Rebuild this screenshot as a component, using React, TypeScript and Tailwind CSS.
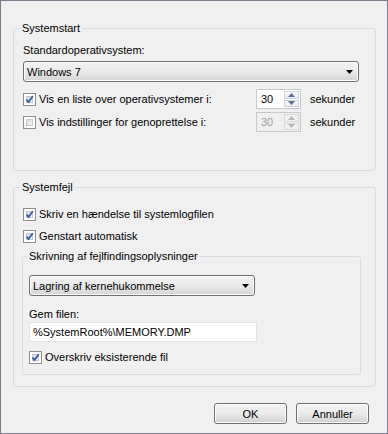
import React from "react";

function Checkbox({ checked }: { checked?: boolean }) {
  return (
    <span className="relative block w-[13px] h-[13px] shrink-0 border border-[#8e8f8f] bg-white p-[2px]">
      <span className="block w-full h-full border border-[#c5c8cd] bg-gradient-to-br from-[#d6d9de] to-[#f6f6f6]" />
      {checked && (
        <svg className="absolute left-0 top-0" width="11" height="11" viewBox="0 0 11 11">
          <path d="M2.5 5.5 L4.5 8 L8.8 2.2" fill="none" stroke="#3b5da0" strokeWidth="1.9" strokeLinejoin="miter" />
        </svg>
      )}
    </span>
  );
}

function ComboBox({ text, width }: { text: string; width: string }) {
  return (
    <div
      className={`${width} h-[21px] flex items-center justify-between rounded-[3px] border border-[#707070] bg-gradient-to-b from-[#f2f2f2] via-[#ebebeb] to-[#d4d4d4] shadow-[inset_0_0_0_1px_#fcfcfc] pl-[3px] pr-[5px]`}
    >
      <span>{text}</span>
      <svg width="7" height="4" viewBox="0 0 7 4">
        <path d="M0 0 H7 L3.5 4 Z" fill="#000" />
      </svg>
    </div>
  );
}

function Spin({ disabled }: { disabled?: boolean }) {
  const arrow = disabled ? "#b5b5b5" : "#5a6f9c";
  return (
    <div
      className={`flex h-[20px] w-[45px] shrink-0 border ${
        disabled ? "border-[#c9c9c9] bg-[#f0f0f0] text-[#a0a0a0]" : "border-[#c5c8cf] bg-white"
      }`}
    >
      <div className="flex-1 flex items-center pl-[4px]">30</div>
      <div className="w-[17px] flex flex-col gap-[1px] p-[1px]">
        <div
          className={`flex-1 flex items-center justify-center border ${
            disabled ? "border-[#d9d9d9] bg-[#f0f0f0]" : "border-[#cfd3da] bg-gradient-to-b from-[#fafafa] to-[#e8ebef]"
          }`}
        >
          <svg width="7" height="4" viewBox="0 0 7 4">
            <path d="M0 4 H7 L3.5 0 Z" fill={arrow} />
          </svg>
        </div>
        <div
          className={`flex-1 flex items-center justify-center border ${
            disabled ? "border-[#d9d9d9] bg-[#f0f0f0]" : "border-[#cfd3da] bg-gradient-to-b from-[#fafafa] to-[#e8ebef]"
          }`}
        >
          <svg width="7" height="4" viewBox="0 0 7 4">
            <path d="M0 0 H7 L3.5 4 Z" fill={arrow} />
          </svg>
        </div>
      </div>
    </div>
  );
}

function Button({ label }: { label: string }) {
  return (
    <div className="w-[73px] h-[21px] flex items-center justify-center rounded-[3px] border border-[#707070] bg-gradient-to-b from-[#f2f2f2] via-[#ebebeb] to-[#d0d0d0] shadow-[inset_0_0_0_1px_#fcfcfc]">
      {label}
    </div>
  );
}

export default function App() {
  return (
    <div className="w-[388px] h-[434px] bg-[#f0f0f0] border border-[#7c7c8a] font-['Liberation_Sans',Arial,sans-serif] text-[11px] leading-[14px] text-black flex flex-col pt-[20px] pl-[12px] pr-[11px]">
      <fieldset className="border border-[#d5dfe5] rounded-[3px] m-0 p-0 min-w-0">
        <legend className="ml-[6px] px-[2px] leading-[15px]">Systemstart</legend>
        <div className="pl-[9px] pr-[16px] pt-[7px] pb-[37px] flex flex-col">
          <div className="leading-[15px]">Standardoperativsystem:</div>
          <div className="mt-[3px]">
            <ComboBox text="Windows 7" width="w-full" />
          </div>
          <div className="mt-[6px] h-[22px] flex items-center">
            <div className="w-[233px] flex items-center gap-[3px]">
              <Checkbox checked />
              <span>Vis en liste over operativsystemer i:</span>
            </div>
            <Spin />
            <span className="ml-[9px]">sekunder</span>
          </div>
          <div className="mt-[1px] h-[22px] flex items-center">
            <div className="w-[233px] flex items-center gap-[3px]">
              <Checkbox />
              <span>Vis indstillinger for genoprettelse i:</span>
            </div>
            <Spin disabled />
            <span className="ml-[9px]">sekunder</span>
          </div>
        </div>
      </fieldset>

      <fieldset className="mt-[9px] border border-[#d5dfe5] rounded-[3px] m-0 p-0 min-w-0">
        <legend className="ml-[6px] px-[2px] leading-[15px]">Systemfejl</legend>
        <div className="pl-[9px] pr-[14px] pt-[8px] pb-[11px] flex flex-col">
          <div className="h-[22px] flex items-center gap-[3px]">
            <Checkbox checked />
            <span>Skriv en hændelse til systemlogfilen</span>
          </div>
          <div className="h-[22px] flex items-center gap-[3px]">
            <Checkbox checked />
            <span>Genstart automatisk</span>
          </div>
          <fieldset className="mt-[2px] -ml-[1px] border border-[#d5dfe5] rounded-[3px] p-0 min-w-0">
            <legend className="ml-[4px] px-[2px] leading-[15px]">Skrivning af fejlfindingsoplysninger</legend>
            <div className="pl-[6px] pt-[11px] pb-[6px] flex flex-col">
              <ComboBox text="Lagring af kernehukommelse" width="w-[226px]" />
              <div className="mt-[11px] leading-[14px]">Gem filen:</div>
              <div className="mt-[1px] w-[228px] h-[20px] bg-white border border-[#dfe3e8] flex items-center pl-[3px]">
                %SystemRoot%\MEMORY.DMP
              </div>
              <div className="mt-[4px] h-[22px] flex items-center gap-[3px]">
                <Checkbox checked />
                <span>Overskriv eksisterende fil</span>
              </div>
            </div>
          </fieldset>
        </div>
      </fieldset>

      <div className="mt-[16px] flex justify-end gap-[9px] pr-[7px]">
        <Button label="OK" />
        <Button label="Annuller" />
      </div>
    </div>
  );
}
